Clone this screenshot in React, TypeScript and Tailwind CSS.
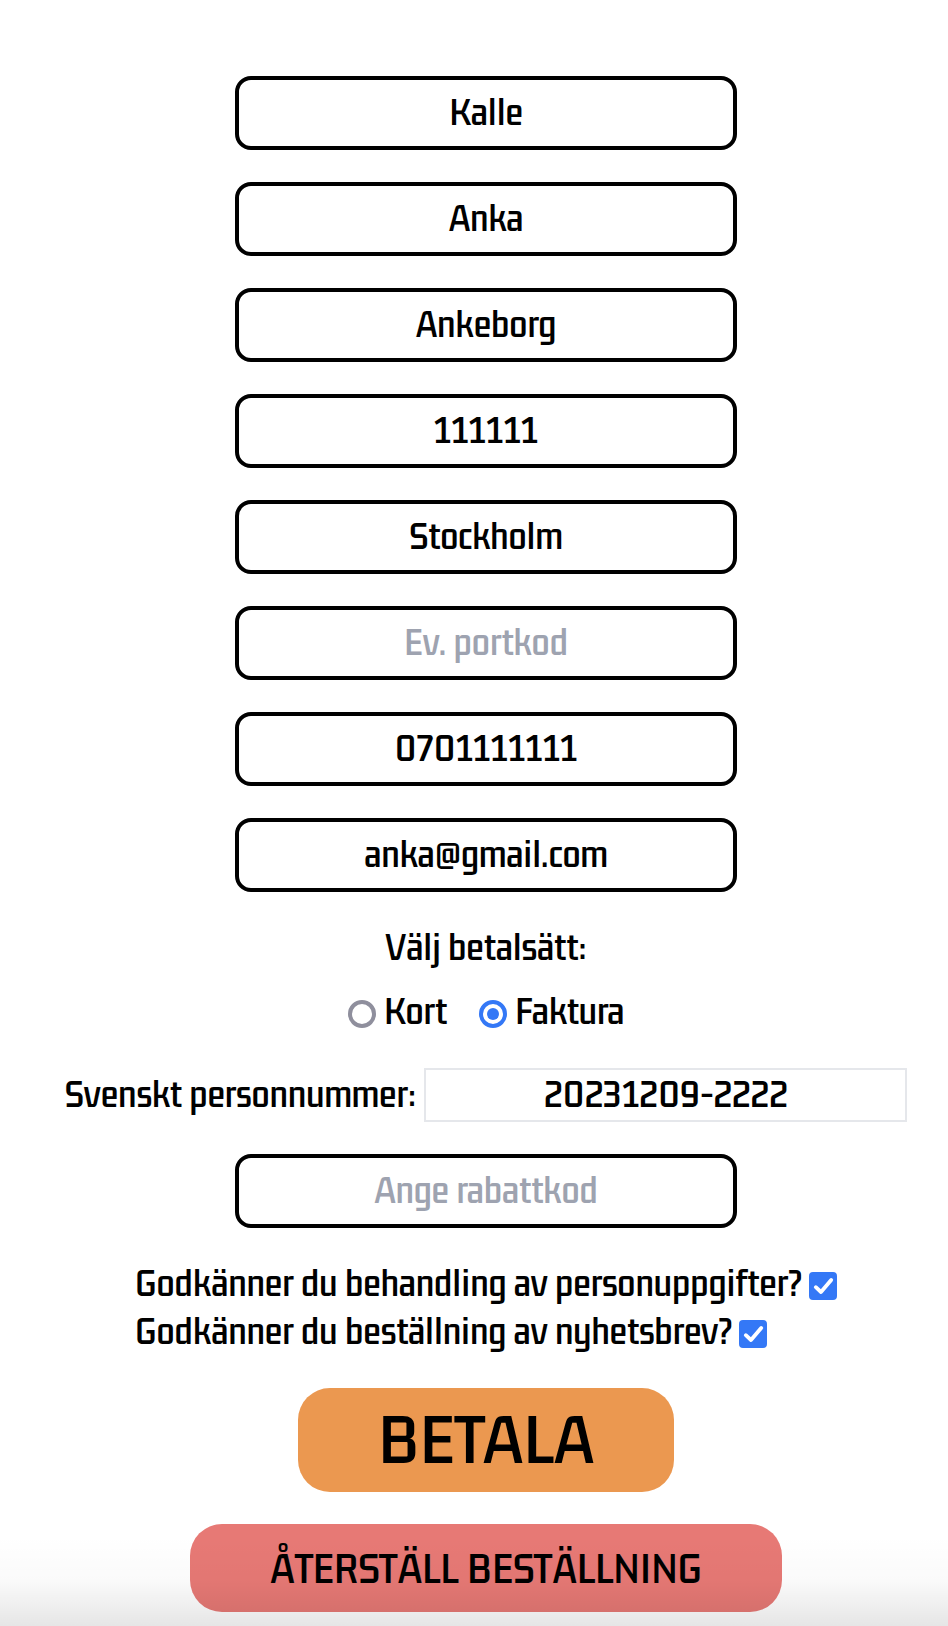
import { useState } from "react";

type Field = { name: string; label: string; type?: string; value?: string; placeholder?: string };

const fields: Field[] = [
  { name: "firstName", label: "Förnamn", value: "Kalle" },
  { name: "lastName", label: "Efternamn", value: "Anka" },
  { name: "address", label: "Adress", value: "Ankeborg" },
  { name: "zip", label: "Postnummer", value: "111111" },
  { name: "city", label: "Ort", value: "Stockholm" },
  { name: "doorCode", label: "Portkod", placeholder: "Ev. portkod" },
  { name: "phone", label: "Telefon", type: "tel", value: "0701111111" },
  { name: "email", label: "E-post", type: "email", value: "anka@gmail.com" },
];

function BoxedInput({ name, label, type = "text", value, placeholder }: Field) {
  return (
    <input
      name={name}
      type={type}
      aria-label={label}
      defaultValue={value}
      placeholder={placeholder}
      className="block h-[74px] w-full max-w-[502px] rounded-2xl border-4 border-black bg-white px-4 pb-1 text-center placeholder:text-[#9ea3b0] placeholder:opacity-100"
    />
  );
}

function PaymentOption({ id, text, checked, onSelect }: { id: string; text: string; checked: boolean; onSelect: () => void }) {
  return (
    <div className="flex items-center gap-2">
      <input
        id={id}
        type="radio"
        name="payment"
        checked={checked}
        onChange={onSelect}
        className="mt-1 grid size-7 appearance-none place-content-center rounded-full border-4 border-[#8f8f9d] bg-white checked:border-[#3478f6] checked:before:size-3 checked:before:rounded-full checked:before:bg-[#3478f6]"
      />
      <label htmlFor={id} className="pb-0.5 leading-[46px]">{text}</label>
    </div>
  );
}

function Consent({ id, text }: { id: string; text: string }) {
  return (
    <div className="flex items-center gap-1.5">
      <label htmlFor={id} className="pb-0.5 leading-[46px]">{text}</label>
      <span className="mt-1 grid size-7 shrink-0">
        <input
          id={id}
          type="checkbox"
          defaultChecked
          className="peer col-start-1 row-start-1 size-7 appearance-none rounded border-2 border-[#8f8f9d] bg-white checked:border-[#3478f6] checked:bg-[#3478f6]"
        />
        <svg
          viewBox="0 0 28 28"
          aria-hidden="true"
          className="pointer-events-none col-start-1 row-start-1 hidden size-7 fill-none stroke-white peer-checked:block"
        >
          <path d="M6.8 15.2 L12 20 L22.2 8" strokeWidth="3.8" strokeLinecap="round" strokeLinejoin="round" />
        </svg>
      </span>
    </div>
  );
}

export default function App() {
  const [payment, setPayment] = useState("faktura");

  return (
    <main className="relative min-h-screen bg-white pt-[76px] pb-[14px] pl-6 font-['Gemunu_Libre','Roboto_Condensed','Roboto',sans-serif] text-[40px] leading-[48px] font-semibold text-black">
      <form className="flex flex-col items-center gap-8" onSubmit={(e) => e.preventDefault()}>
        {fields.map((field) => (
          <BoxedInput key={field.name} {...field} />
        ))}

        <fieldset className="flex flex-col items-center">
          <legend className="mx-auto mb-4 pb-0.5 leading-[46px]">Välj betalsätt:</legend>
          <div className="flex gap-8">
            <PaymentOption id="kort" text="Kort" checked={payment === "kort"} onSelect={() => setPayment("kort")} />
            <PaymentOption id="faktura" text="Faktura" checked={payment === "faktura"} onSelect={() => setPayment("faktura")} />
          </div>
        </fieldset>

        <div className="flex items-center gap-2">
          <label htmlFor="personnummer" className="pb-0.5 leading-[46px]">Svenskt personnummer:</label>
          <input
            id="personnummer"
            type="text"
            defaultValue="20231209-2222"
            className="h-[54px] w-[483px] min-w-0 border-2 border-[#e5e7eb] bg-white pb-1 text-center"
          />
        </div>

        <BoxedInput name="discount" label="Rabattkod" placeholder="Ange rabattkod" />

        <div className="flex w-full max-w-[702px] flex-col">
          <Consent id="gdpr" text="Godkänner du behandling av personuppgifter?" />
          <Consent id="newsletter" text="Godkänner du beställning av nyhetsbrev?" />
        </div>

        <button type="submit" className="rounded-[32px] bg-[#eb9850] px-20 pt-3.5 pb-[18px] text-[75px] leading-[72px]">
          BETALA
        </button>
        <button type="reset" className="rounded-[32px] bg-[#e77975] px-20 py-5 text-[45px] leading-[48px]">
          ÅTERSTÄLL BESTÄLLNING
        </button>
      </form>
      <div className="pointer-events-none absolute inset-x-0 bottom-0 h-[90px] bg-linear-to-b from-black/0 via-black/2 to-black/10" />
    </main>
  );
}
